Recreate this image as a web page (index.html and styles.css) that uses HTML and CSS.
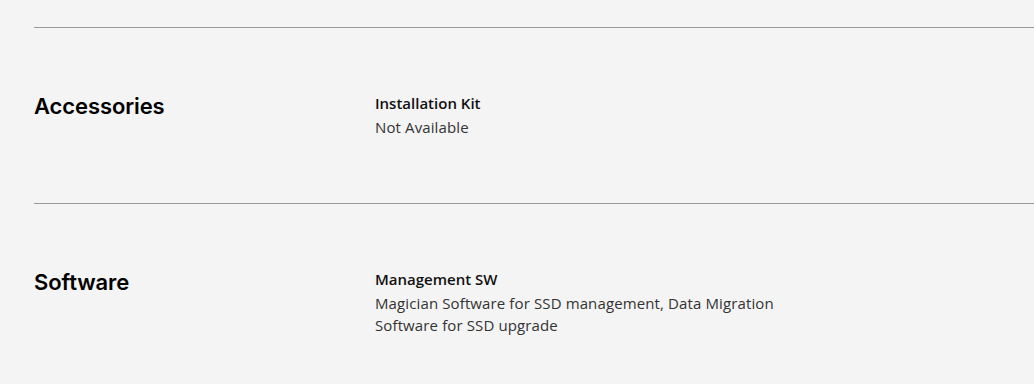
FILE: index.html
```html
<!DOCTYPE html>
<html>
<head>
<meta charset="utf-8">
<link rel="stylesheet" href="styles.css">
</head>
<body>
<div class="specs">
  <section class="spec">
    <h3 class="spec-title">Accessories</h3>
    <div class="spec-items">
      <div class="item">
        <p class="item-label">Installation Kit</p>
        <p class="item-value">Not Available</p>
      </div>
    </div>
  </section>
  <section class="spec">
    <h3 class="spec-title">Software</h3>
    <div class="spec-items">
      <div class="item">
        <p class="item-label">Management SW</p>
        <p class="item-value">Magician Software for SSD management, Data Migration<br>Software for SSD upgrade</p>
      </div>
    </div>
  </section>
</div>
</body>
</html>
```
FILE: styles.css
```css
html, body {
  margin: 0;
  background: #f4f4f4;
}
.specs {
  padding: 27px 0 0 34px;
}
.spec {
  border-top: 1px solid #9a9a9a;
  display: grid;
  grid-template-columns: 341px 1fr;
  padding: 64px 0 0;
  height: 111px;
}
.spec-title {
  margin: 0;
  font-family: "Inter", sans-serif;
  font-weight: 600;
  font-size: 22px;
  line-height: 28px;
  letter-spacing: -0.1px;
  color: #000;
}
.item-label {
  margin: 0;
  font-family: "Open Sans", sans-serif;
  font-weight: 600;
  font-size: 15px;
  line-height: 22px;
  color: #111;
}
.item-value {
  margin: 2px 0 0;
  font-family: "Open Sans", sans-serif;
  font-size: 15px;
  line-height: 22px;
  letter-spacing: 0.12px;
  color: #333;
}
```
